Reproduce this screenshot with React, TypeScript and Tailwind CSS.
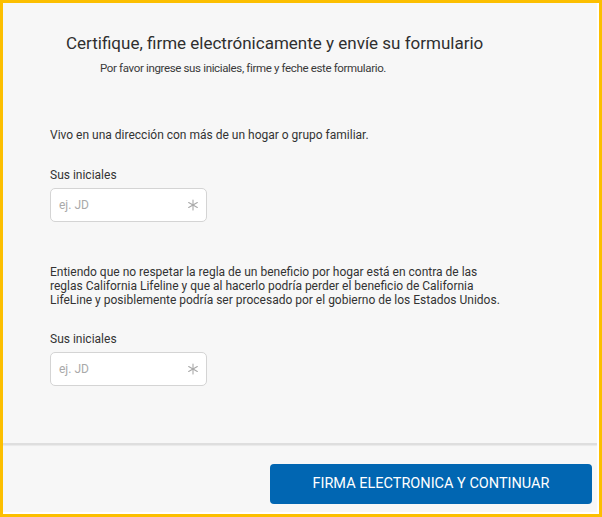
import React from "react";
import { Asterisk } from "lucide-react";

function InitialsField() {
  return (
    <div className="flex flex-col">
      <label className="text-[12px] leading-[16px] text-[#333]">Sus iniciales</label>
      <div className="mt-[5px] flex h-[34px] w-[157px] items-center justify-between rounded-[5px] border border-[#d4d4d4] bg-white pl-[8px] pr-[3px]">
        <span className="text-[12px] text-[#a9a9a9]">ej. JD</span>
        <Asterisk size={20} strokeWidth={1.3} className="text-[#a8a8a8]" />
      </div>
    </div>
  );
}

export default function App() {
  return (
    <div
      className="flex h-[517px] w-[602px] flex-col border-[3px] border-[#fcbf00] bg-white"
      style={{ fontFamily: "Roboto, 'Liberation Sans', sans-serif" }}
    >
      <div className="mr-[2px] mb-[2px] flex flex-1 flex-col bg-[#f7f7f7]">
        <div className="flex h-[440px] flex-col pl-[47px]">
          <h1 className="mt-[29px] ml-[16px] text-[17px] leading-[22px] text-[#2f2f2f]">
            Certifique, firme electrónicamente y envíe su formulario
          </h1>
          <p className="mt-[7px] ml-[50px] text-[11.5px] leading-[15px] tracking-[-0.35px] text-[#3a3a3a]">
            Por favor ingrese sus iniciales, firme y feche este formulario.
          </p>
          <p className="mt-[52px] text-[12px] leading-[15px] text-[#333]">
            Vivo en una dirección con más de un hogar o grupo familiar.
          </p>
          <div className="mt-[24px]">
            <InitialsField />
          </div>
          <p className="mt-[43px] w-[452px] text-[12px] leading-[14px] text-[#333]">
            Entiendo que no respetar la regla de un beneficio por hogar está en contra de las reglas California Lifeline y
            que al hacerlo podría perder el beneficio de California LifeLine y posiblemente podría ser procesado por el
            gobierno de los Estados Unidos.
          </p>
          <div className="mt-[24px]">
            <InitialsField />
          </div>
        </div>
        <div className="h-[2px] bg-[#dedede] shadow-[0_1px_1px_rgba(0,0,0,0.06)]" />
        <div className="flex flex-1 items-start justify-end pr-[5px] pt-[19px]">
          <button className="flex h-[40px] w-[322px] items-center justify-center rounded-[4px] bg-[#0166b2] text-[14.5px] uppercase text-white">
            FIRMA ELECTRONICA Y CONTINUAR
          </button>
        </div>
      </div>
    </div>
  );
}
